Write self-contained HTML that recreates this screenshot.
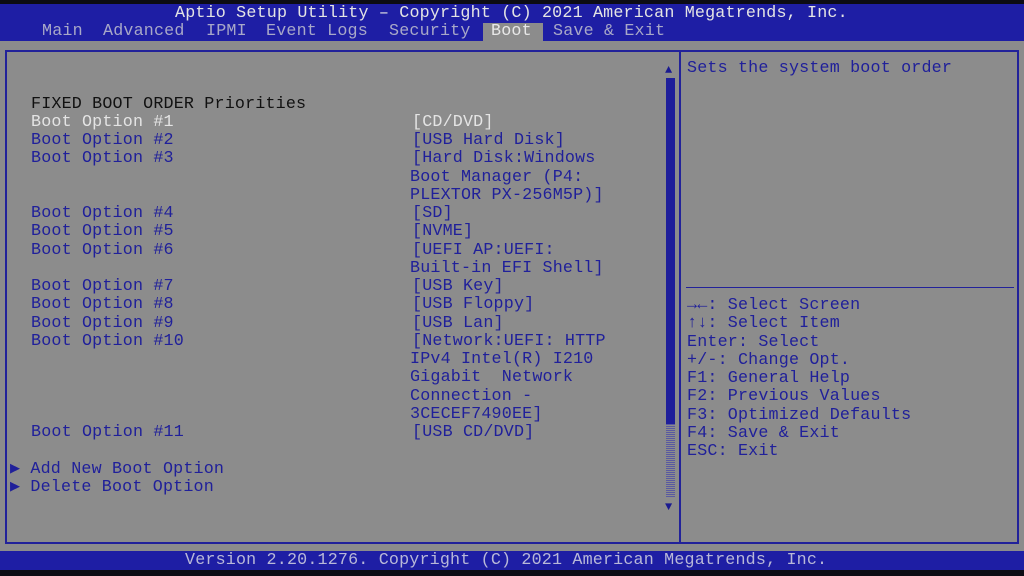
<!DOCTYPE html>
<html><head><meta charset="utf-8"><style>
*{margin:0;padding:0}
body{width:1024px;height:576px;background:#0c0c14;position:relative;overflow:hidden;font-family:"Liberation Mono","DejaVu Sans Mono",monospace;font-size:16.7px;letter-spacing:0.18px}
.a{position:absolute;white-space:pre;line-height:18.25px;}
.b{color:#20209a}
.w{color:#e4e4e4}
.k{color:#111}
.s{margin-left:2px}
</style></head><body>
<div style="position:absolute;left:0;top:4px;width:1024px;height:37px;background:#1e1ea4"></div>
<div style="position:absolute;left:0;top:41px;width:1024px;height:510px;background:#8c8c8c"></div>
<div style="position:absolute;left:0;top:551px;width:1024px;height:19px;background:#1e1ea4"></div>
<div style="position:absolute;left:483px;top:23px;width:60px;height:18px;background:#8c8c8c"></div>
<div class="a" style="left:175px;top:5px;color:#e4e4e4">Aptio Setup Utility – Copyright (C) 2021 American Megatrends, Inc.</div>
<div class="a" style="left:42px;top:23px;color:#a8a8c8">Main</div>
<div class="a" style="left:103px;top:23px;color:#a8a8c8">Advanced</div>
<div class="a" style="left:206px;top:23px;color:#a8a8c8">IPMI</div>
<div class="a" style="left:266px;top:23px;color:#a8a8c8">Event Logs</div>
<div class="a" style="left:389px;top:23px;color:#a8a8c8">Security</div>
<div class="a" style="left:491px;top:23px;color:#e8e8e8">Boot</div>
<div class="a" style="left:553px;top:23px;color:#a8a8c8">Save &amp; Exit</div>
<div style="position:absolute;left:5px;top:50px;width:1010px;height:490px;border:2px solid #22229a"></div>
<div style="position:absolute;left:679px;top:50px;width:2px;height:494px;background:#22229a"></div>
<div style="position:absolute;left:686px;top:287px;width:328px;height:1px;background:#22229a"></div>
<div class="a" style="left:665px;top:61px;color:#1a1a90;font-size:12px">▲</div>
<div style="position:absolute;left:666px;top:78px;width:9px;height:346px;background:#1e1e9a"></div>
<div style="position:absolute;left:666px;top:424px;width:9px;height:73px;background:repeating-linear-gradient(#5a5aa0 0 1px,#8c8c8c 1px 2px)"></div>
<div class="a" style="left:665px;top:498px;color:#1a1a90;font-size:12px">▼</div>
<div class="a k" style="left:31px;top:96px">FIXED BOOT ORDER Priorities</div>
<div class="a w" style="left:31px;top:114px">Boot Option #1</div>
<div class="a w" style="left:412px;top:114px">[CD/DVD]</div>
<div class="a b" style="left:31px;top:132px">Boot Option #2
Boot Option #3


Boot Option #4
Boot Option #5
Boot Option #6

Boot Option #7
Boot Option #8
Boot Option #9
Boot Option #10




Boot Option #11</div>
<div class="a b" style="left:410px;top:132px"><span class="s">[USB Hard Disk]</span>
<span class="s">[Hard Disk:Windows</span>
Boot Manager (P4:
PLEXTOR PX-256M5P)]
<span class="s">[SD]</span>
<span class="s">[NVME]</span>
<span class="s">[UEFI AP:UEFI:</span>
Built-in EFI Shell]
<span class="s">[USB Key]</span>
<span class="s">[USB Floppy]</span>
<span class="s">[USB Lan]</span>
<span class="s">[Network:UEFI: HTTP</span>
IPv4 Intel(R) I210
Gigabit  Network
Connection -
3CECEF7490EE]
<span class="s">[USB CD/DVD]</span></div>
<div class="a b" style="left:10px;top:461px">▶ Add New Boot Option
▶ Delete Boot Option</div>
<div class="a b" style="left:687px;top:60px">Sets the system boot order</div>
<div class="a b" style="left:687px;top:297px"><b>→←</b>: Select Screen
<b>↑↓</b>: Select Item
Enter: Select
+/-: Change Opt.
F1: General Help
F2: Previous Values
F3: Optimized Defaults
F4: Save &amp; Exit
ESC: Exit</div>
<div class="a" style="left:185px;top:552px;color:#b8b8d8">Version 2.20.1276. Copyright (C) 2021 American Megatrends, Inc.</div>
</body></html>
